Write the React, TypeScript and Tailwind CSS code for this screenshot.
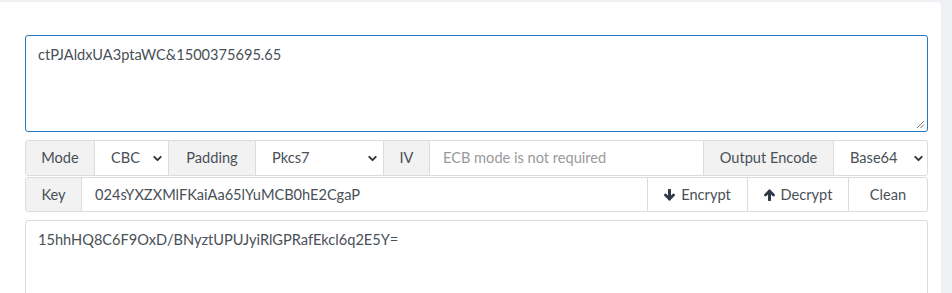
import { ChevronDown } from "lucide-react";

const font = { fontFamily: "Lato, 'Open Sans', sans-serif" };

const Addon = ({ label, w }: { label: string; w: string }) => (
  <div
    className={`${w} flex items-center justify-center bg-[#f2f2f2] text-[#495057] border-r border-[#dcdcdc] shrink-0`}
  >
    {label}
  </div>
);

const Select = ({ value, w }: { value: string; w: string }) => (
  <div
    className={`${w} flex items-center justify-between pl-[16px] pr-[4px] bg-white text-[#495057] border-r border-[#dcdcdc] shrink-0`}
  >
    <span>{value}</span>
    <ChevronDown size={13} strokeWidth={3.5} className="text-[#333]" />
  </div>
);

// solid font-awesome style arrows
const ArrowDown = () => (
  <svg width="11" height="12" viewBox="0 0 11 12" className="mr-[6px]">
    <path d="M5.5 1v9" stroke="#2f3b48" strokeWidth="3" strokeLinecap="round" />
    <path d="M1.5 6l4 4 4-4" stroke="#2f3b48" strokeWidth="2.8" strokeLinecap="round" strokeLinejoin="round" fill="none" />
  </svg>
);

const ArrowUp = () => (
  <svg width="11" height="12" viewBox="0 0 11 12" className="mr-[6px]">
    <path d="M5.5 11V2" stroke="#2f3b48" strokeWidth="3" strokeLinecap="round" />
    <path d="M1.5 6l4-4 4 4" stroke="#2f3b48" strokeWidth="2.8" strokeLinecap="round" strokeLinejoin="round" fill="none" />
  </svg>
);

export default function App() {
  return (
    <div className="w-[952px] h-[293px] bg-[#eef0f3] overflow-hidden pt-[2px]" style={font}>
      <div className="w-[941px] h-[300px] bg-white rounded-tr-[4px] pl-[25px] pr-[13px] pt-[33px] text-[14.6px] text-[#495057]">
        {/* source text */}
        <div className="relative h-[97px] border border-[#2677c2] rounded-[3px] px-[12px] py-[9px] leading-[20px]">
          ctPJAldxUA3ptaWC&amp;1500375695.65
          <svg width="9" height="9" viewBox="0 0 9 9" className="absolute right-[2px] bottom-[2px]">
            <path d="M8 1L1 8M8 4.5L4.5 8" stroke="#777" strokeWidth="1" />
          </svg>
        </div>

        {/* options row */}
        <div className="mt-[8px] flex h-[36px] border border-[#dcdcdc] rounded-[3px] overflow-hidden">
          <Addon label="Mode" w="w-[69px]" />
          <Select value="CBC" w="w-[74px]" />
          <Addon label="Padding" w="w-[87px]" />
          <Select value="Pkcs7" w="w-[128px]" />
          <Addon label="IV" w="w-[46px]" />
          <div className="flex-1 flex items-center px-[13px] text-[#9a9a9a] border-r border-[#dcdcdc]">
            ECB mode is not required
          </div>
          <Addon label="Output Encode" w="w-[130px]" />
          <div className="w-[93px] flex items-center justify-between pl-[16px] pr-[2px] shrink-0">
            <span>Base64</span>
            <ChevronDown size={13} strokeWidth={3.5} className="text-[#333]" />
          </div>
        </div>

        {/* key row */}
        <div className="mt-px flex h-[35px] border border-[#dcdcdc] rounded-[3px] overflow-hidden">
          <Addon label="Key" w="w-[56px]" />
          <div className="flex-1 flex items-center px-[13px] border-r border-[#dcdcdc]">
            024sYXZXMlFKaiAa65lYuMCB0hE2CgaP
          </div>
          <div className="w-[100px] flex items-center justify-center border-r border-[#dcdcdc] shrink-0">
            <ArrowDown />
            Encrypt
          </div>
          <div className="w-[101px] flex items-center justify-center border-r border-[#dcdcdc] shrink-0">
            <ArrowUp />
            Decrypt
          </div>
          <div className="flex-1 max-w-[78px] flex items-center justify-center">Clean</div>
        </div>

        {/* result */}
        <div className="mt-[8px] h-[96px] border border-[#dcdcdc] rounded-[3px] px-[12px] py-[9px] leading-[20px]">
          15hhHQ8C6F9OxD/BNyztUPUJyiRlGPRafEkcl6q2E5Y=
        </div>
      </div>
    </div>
  );
}
